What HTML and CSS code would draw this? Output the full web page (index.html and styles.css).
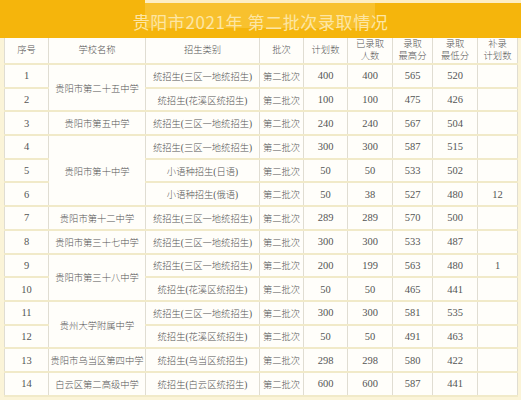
FILE: index.html
```html
<!DOCTYPE html>
<html lang="zh">
<head>
<meta charset="utf-8">
<title>贵阳市2021年 第二批次录取情况</title>
<link rel="stylesheet" href="styles.css">
</head>
<body>
<div class="banner"><h1 class="title">贵阳市2021年 第二批次录取情况</h1></div>
<table class="grid">
  <colgroup>
    <col class="c-no"><col class="c-school"><col class="c-type"><col class="c-batch"><col class="c-plan"><col class="c-got"><col class="c-max"><col class="c-min"><col class="c-add">
  </colgroup>
  <thead>
    <tr><th>序号</th><th>学校名称</th><th>招生类别</th><th>批次</th><th>计划数</th><th>已录取<br>人数</th><th>录取<br>最高分</th><th>录取<br>最低分</th><th>补录<br>计划数</th></tr>
  </thead>
  <tbody>
    <tr><td class="n">1</td><td rowspan="2">贵阳市第二十五中学</td><td>统招生(三区一地统招生)</td><td>第二批次</td><td class="n">400</td><td class="n">400</td><td class="n">565</td><td class="n">520</td><td class="n"></td></tr>
    <tr><td class="n">2</td><td>统招生(花溪区统招生)</td><td>第二批次</td><td class="n">100</td><td class="n">100</td><td class="n">475</td><td class="n">426</td><td class="n"></td></tr>
    <tr><td class="n">3</td><td>贵阳市第五中学</td><td>统招生(三区一地统招生)</td><td>第二批次</td><td class="n">240</td><td class="n">240</td><td class="n">567</td><td class="n">504</td><td class="n"></td></tr>
    <tr><td class="n">4</td><td rowspan="3">贵阳市第十中学</td><td>统招生(三区一地统招生)</td><td>第二批次</td><td class="n">300</td><td class="n">300</td><td class="n">587</td><td class="n">515</td><td class="n"></td></tr>
    <tr><td class="n">5</td><td>小语种招生(日语)</td><td>第二批次</td><td class="n">50</td><td class="n">50</td><td class="n">533</td><td class="n">502</td><td class="n"></td></tr>
    <tr><td class="n">6</td><td>小语种招生(俄语)</td><td>第二批次</td><td class="n">50</td><td class="n">38</td><td class="n">527</td><td class="n">480</td><td class="n">12</td></tr>
    <tr><td class="n">7</td><td>贵阳市第十二中学</td><td>统招生(三区一地统招生)</td><td>第二批次</td><td class="n">289</td><td class="n">289</td><td class="n">570</td><td class="n">500</td><td class="n"></td></tr>
    <tr><td class="n">8</td><td>贵阳市第三十七中学</td><td>统招生(三区一地统招生)</td><td>第二批次</td><td class="n">300</td><td class="n">300</td><td class="n">533</td><td class="n">487</td><td class="n"></td></tr>
    <tr><td class="n">9</td><td rowspan="2">贵阳市第三十八中学</td><td>统招生(三区一地统招生)</td><td>第二批次</td><td class="n">200</td><td class="n">199</td><td class="n">563</td><td class="n">480</td><td class="n">1</td></tr>
    <tr><td class="n">10</td><td>统招生(花溪区统招生)</td><td>第二批次</td><td class="n">50</td><td class="n">50</td><td class="n">465</td><td class="n">441</td><td class="n"></td></tr>
    <tr><td class="n">11</td><td rowspan="2">贵州大学附属中学</td><td>统招生(三区一地统招生)</td><td>第二批次</td><td class="n">300</td><td class="n">300</td><td class="n">581</td><td class="n">535</td><td class="n"></td></tr>
    <tr><td class="n">12</td><td>统招生(花溪区统招生)</td><td>第二批次</td><td class="n">50</td><td class="n">50</td><td class="n">491</td><td class="n">463</td><td class="n"></td></tr>
    <tr><td class="n">13</td><td>贵阳市乌当区第四中学</td><td>统招生(乌当区统招生)</td><td>第二批次</td><td class="n">298</td><td class="n">298</td><td class="n">580</td><td class="n">422</td><td class="n"></td></tr>
    <tr><td class="n">14</td><td>白云区第二高级中学</td><td>统招生(白云区统招生)</td><td>第二批次</td><td class="n">600</td><td class="n">600</td><td class="n">587</td><td class="n">441</td><td class="n"></td></tr>
  </tbody>
</table>
</body>
</html>
```
FILE: styles.css
```css
html, body {
  margin: 0;
  padding: 0;
}
body {
  width: 521px;
  height: 400px;
  overflow: hidden;
  background: #fbf4d8;
  font-family: "Liberation Serif", "Noto Sans CJK SC", serif;
  color: #555;
}
.banner {
  height: 38px;
  box-sizing: border-box;
  padding-top: 5px;
  display: flex;
  align-items: center;
  justify-content: center;
  background:
    linear-gradient(#fdeec4, #fdeec4) 145px 0 / 376px 3px no-repeat,
    linear-gradient(#f8c12e, #f8c12e) 145px 3px / 230px 25px no-repeat,
    #f5b50c;
}
.title {
  margin: 0;
  font-family: "Noto Sans CJK SC", sans-serif;
  font-weight: normal;
  font-size: 17px;
  letter-spacing: 0.6px;
  color: #fde6a4;
  line-height: 20px;
}
.grid {
  margin-left: 4px;
  width: 513px;
  table-layout: fixed;
  border-collapse: collapse;
  background: #fffefa;
}
.c-no { width: 44px; }
.c-school { width: 97px; }
.c-type { width: 114px; }
.c-batch { width: 44px; }
.c-plan { width: 44px; }
.c-got { width: 45px; }
.c-max { width: 40px; }
.c-min { width: 45px; }
.c-add { width: 40px; }
.grid th,
.grid td {
  padding: 0;
  text-align: center;
  vertical-align: middle;
  font-weight: 300;
  font-size: 9.3px;
  white-space: nowrap;
  border-left: 1px solid #e0ddd2;
  border-right: 1px solid #e0ddd2;
  border-top: 2px solid #f1eac9;
  border-bottom: 2px solid #f1eac9;
}
.grid th {
  height: 25px;
  line-height: 11.5px;
  border-top: none;
}
.grid td {
  height: 21.7px;
}
.grid td.n {
  font-size: 10.5px;
  font-weight: normal;
}
```
